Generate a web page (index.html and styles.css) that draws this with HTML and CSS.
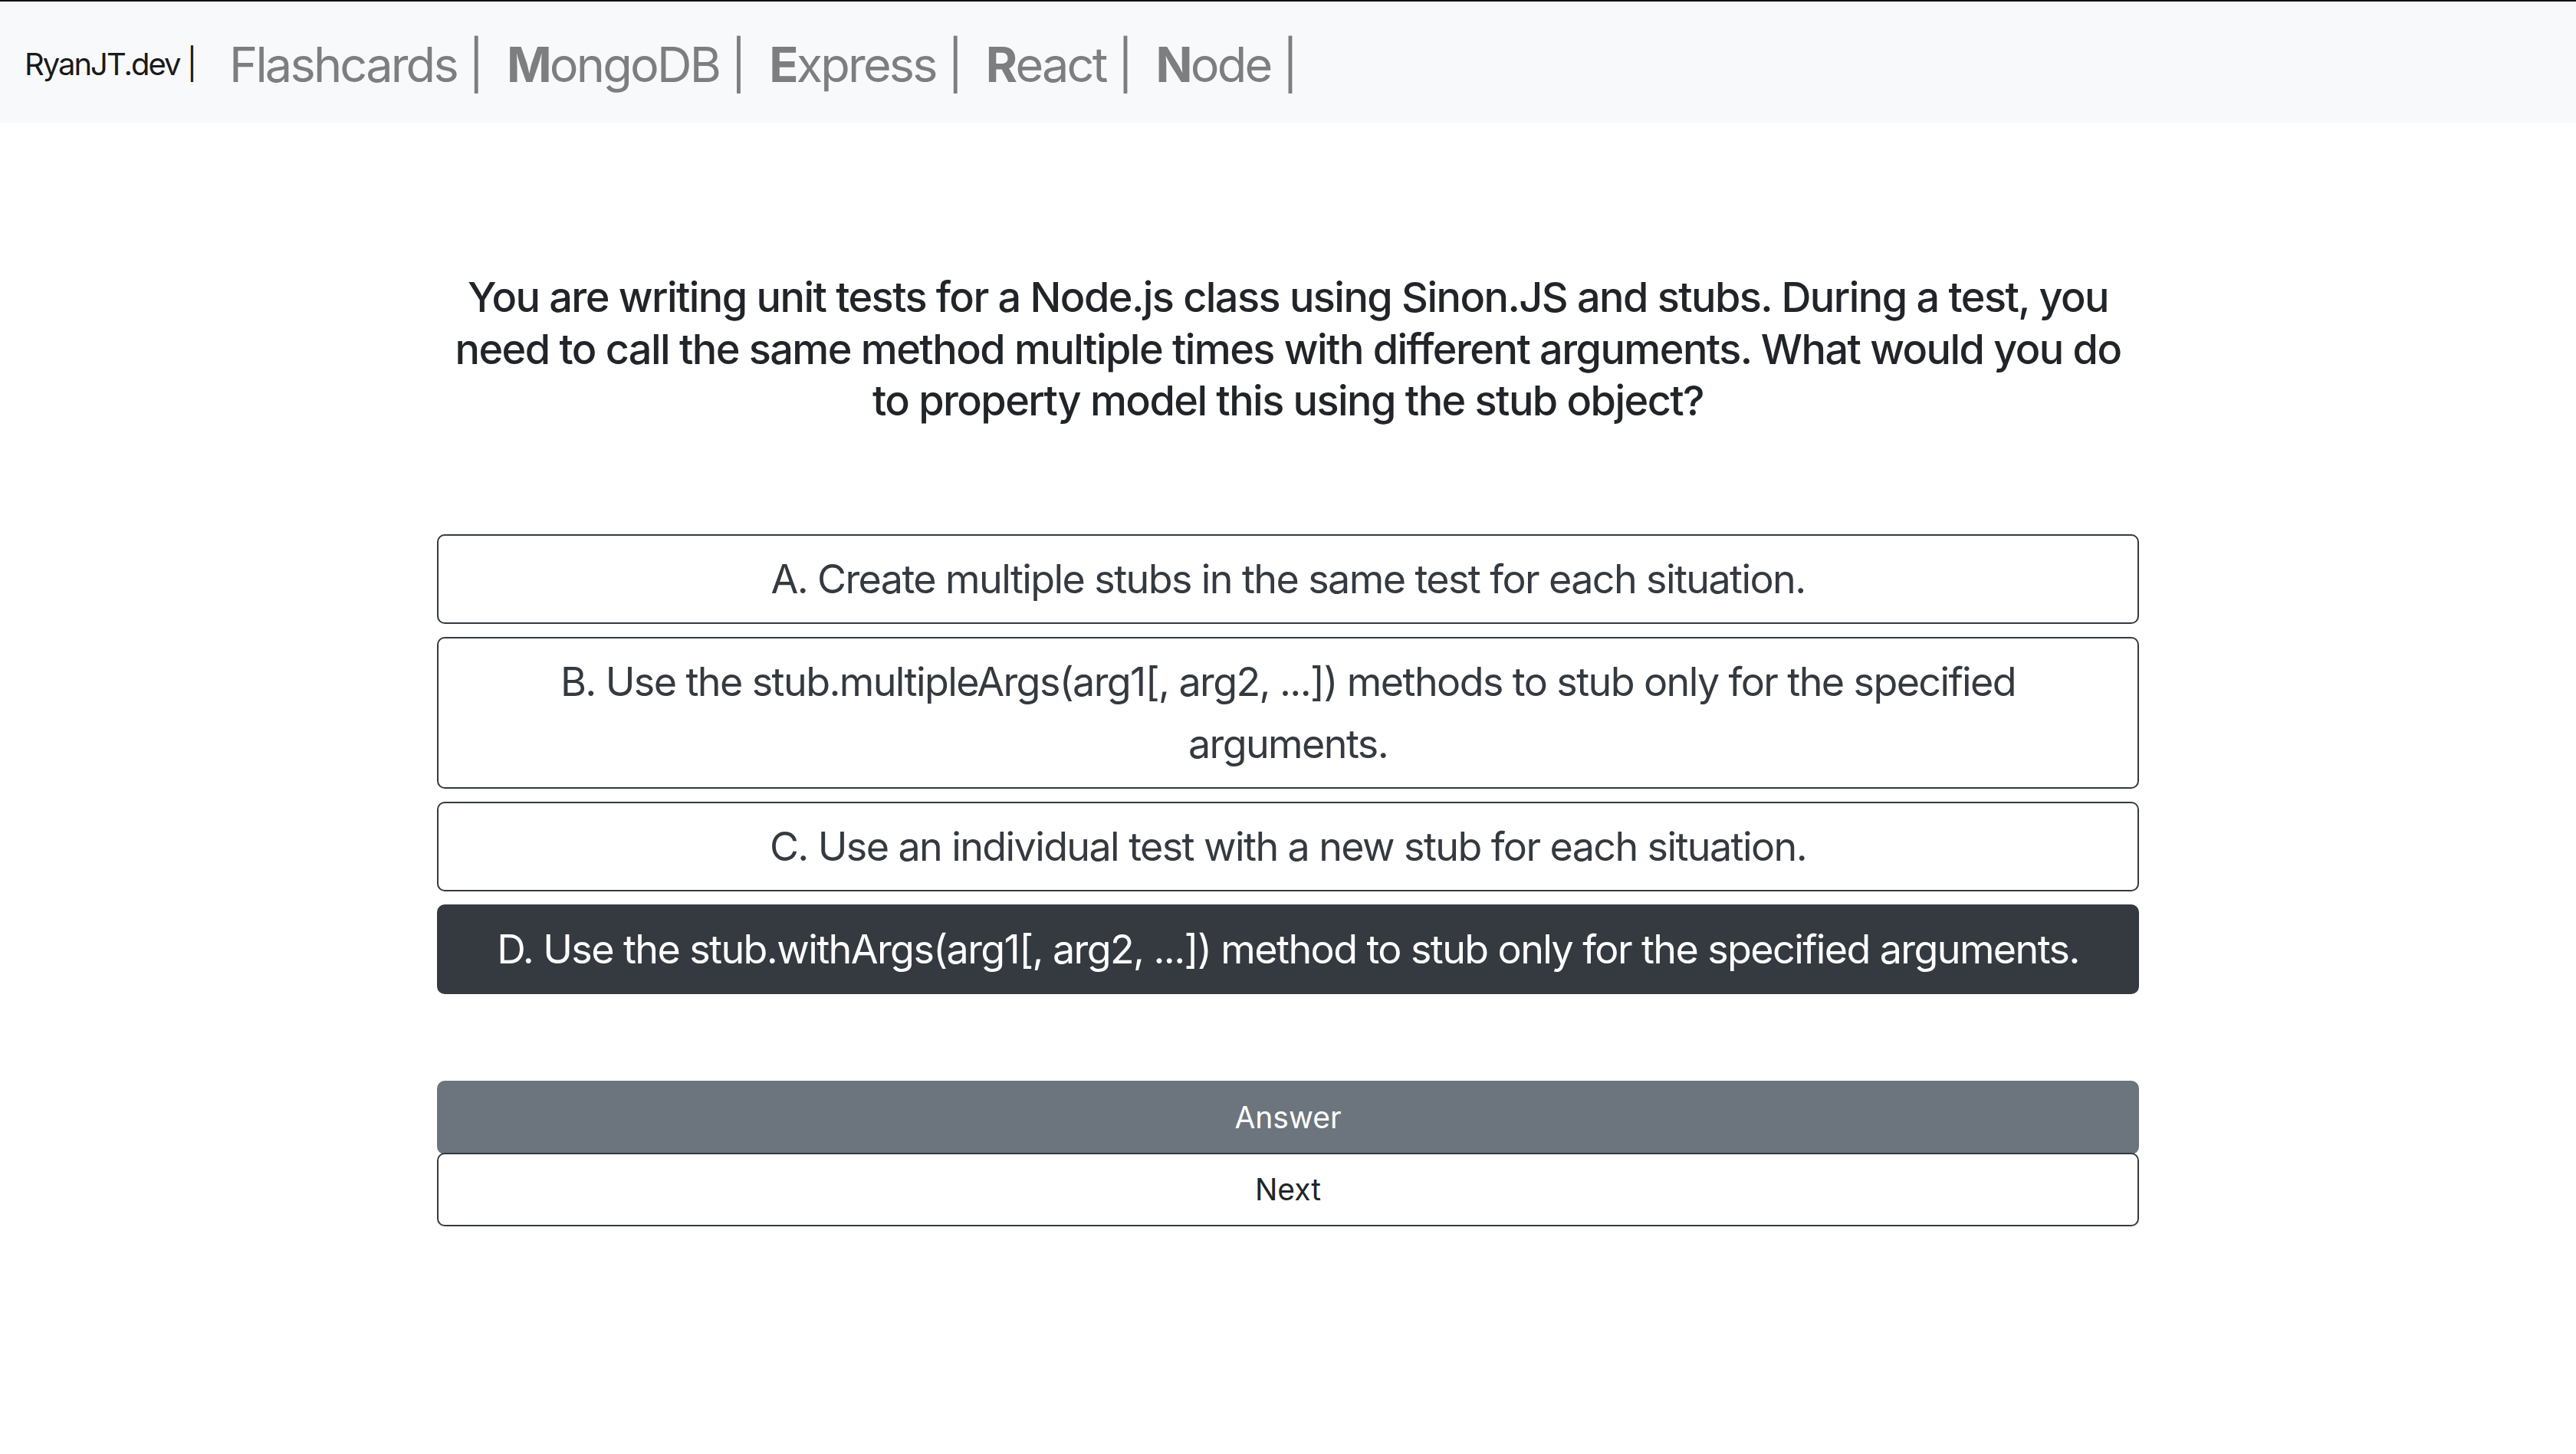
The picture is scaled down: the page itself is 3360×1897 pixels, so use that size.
FILE: index.html
```html
<!DOCTYPE html>
<html lang="en">
<head>
<meta charset="utf-8">
<title>RyanJT.dev Flashcards</title>
<link rel="stylesheet" href="styles.css">
</head>
<body>
<nav class="navbar">
  <a class="brand" href="#">RyanJT.dev |</a>
  <ul class="nav">
    <li><a class="nav-link" href="#">Flashcards |</a></li>
    <li><a class="nav-link" href="#"><b>M</b>ongoDB |</a></li>
    <li><a class="nav-link" href="#"><b>E</b>xpress |</a></li>
    <li><a class="nav-link" href="#"><b>R</b>eact |</a></li>
    <li><a class="nav-link" href="#"><b>N</b>ode |</a></li>
  </ul>
</nav>
<main class="container">
  <h3 class="question">You are writing unit tests for a Node.js class using Sinon.JS and stubs. During a test, you need to call the same method multiple times with different arguments. What would you do to property model this using the stub object?</h3>
  <div class="options">
    <button class="option">A. Create multiple stubs in the same test for each situation.</button>
    <button class="option">B. Use the stub.multipleArgs(arg1[, arg2, ...]) methods to stub only for the specified arguments.</button>
    <button class="option">C. Use an individual test with a new stub for each situation.</button>
    <button class="option selected">D. Use the stub.withArgs(arg1[, arg2, ...]) method to stub only for the specified arguments.</button>
  </div>
  <div class="actions">
    <button class="btn answer">Answer</button>
    <button class="btn next">Next</button>
  </div>
</main>
</body>
</html>
```
FILE: styles.css
```css
* { box-sizing: border-box; }
html, body {
  margin: 0;
  padding: 0;
  background: #fff;
  font-family: Inter, "Noto Sans", "Liberation Sans", sans-serif;
  color: #212529;
}
.navbar {
  display: flex;
  align-items: center;
  background: #f8f9fa;
  border-top: 2px solid #111;
  padding: 18px 32px 12px;
}
.brand {
  font-size: 40px;
  line-height: 60px;
  color: #1a1a1a;
  text-decoration: none;
  margin-right: 28px;
  letter-spacing: -2px;
}
.nav {
  display: flex;
  list-style: none;
  margin: 0;
  padding: 0;
}
.nav-link {
  display: block;
  padding: 16px 16px;
  font-size: 63px;
  line-height: 96px;
  color: #7d7e7f;
  text-decoration: none;
  letter-spacing: -2.8px;
}
.nav-link b { font-weight: 700; }
.container {
  width: 2280px;
  margin: 0 auto;
  padding: 0 30px;
}
.question {
  margin: 194px 0 0;
  font-size: 54px;
  line-height: 67.5px;
  font-weight: 500;
  text-align: center;
  letter-spacing: -1.55px;
  color: #212529;
}
.options {
  display: flex;
  flex-direction: column;
  gap: 17px;
  margin-top: 140px;
}
.option {
  display: block;
  width: 100%;
  font-family: inherit;
  font-size: 52px;
  line-height: 81px;
  padding: 16px 30px;
  border: 2px solid #343a40;
  border-radius: 10px;
  background: #fff;
  color: #343a40;
  text-align: center;
  letter-spacing: -1.6px;
}
.option.selected {
  background: #343a40;
  color: #fff;
}
.actions {
  display: flex;
  flex-direction: column;
  margin-top: 113px;
}
.btn {
  display: block;
  width: 100%;
  font-family: inherit;
  font-size: 39px;
  line-height: 60px;
  padding: 16px 32px;
  border: 2px solid #6c757d;
  border-radius: 10px;
  text-align: center;
}
.answer {
  background: #6c757d;
  color: #fff;
}
.next {
  background: #fff;
  border-color: #343a40;
  color: #212529;
  margin-top: -2px;
}
```
